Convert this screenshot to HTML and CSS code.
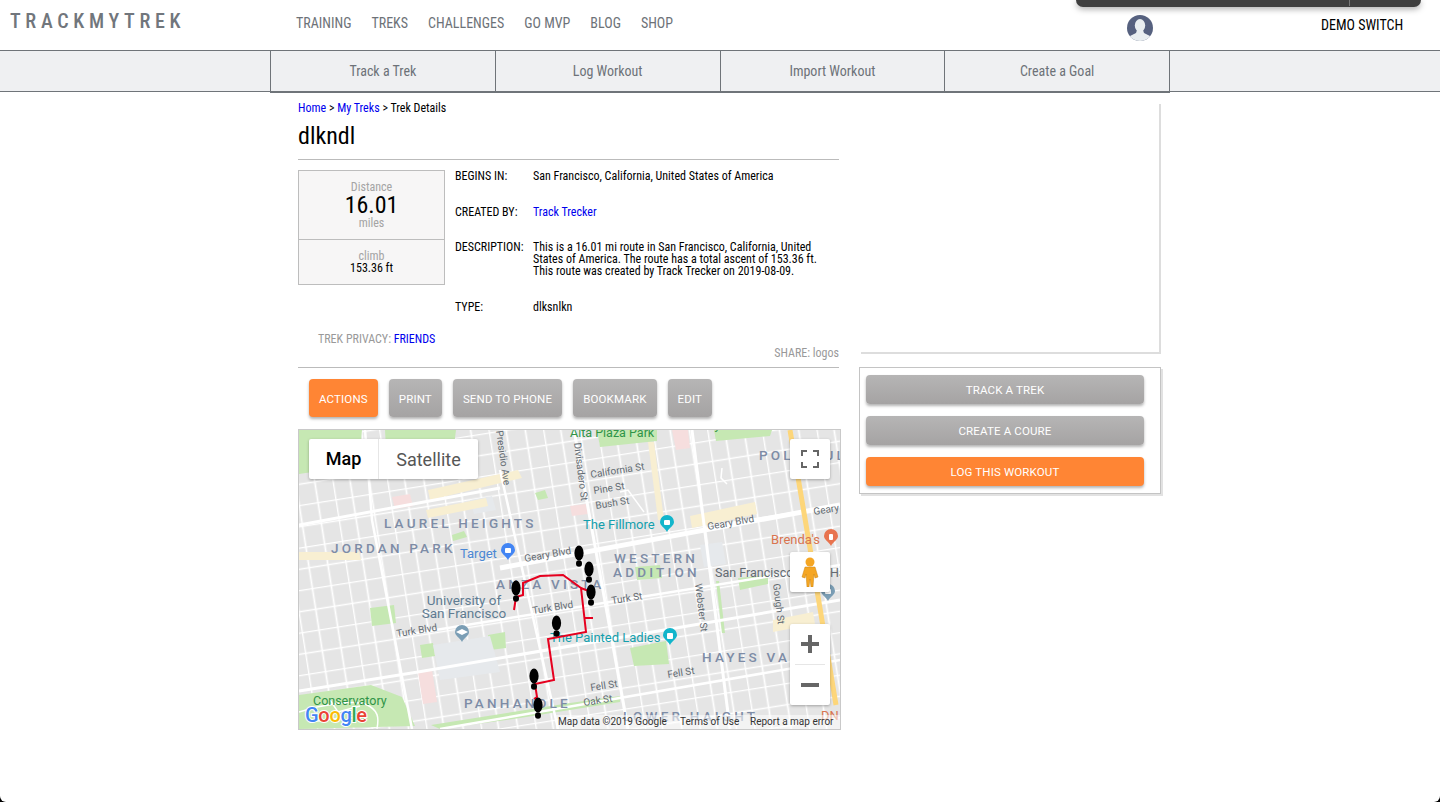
FILE: index.html
```html
<!DOCTYPE html>
<html lang="en">
<head>
<meta charset="utf-8">
<title>TrackMyTrek</title>
<link rel="stylesheet" href="styles.css">
</head>
<body>
<div class="osbar"></div>
<header class="topbar">
  <a class="logo">TRACKMYTREK</a>
  <nav class="mainnav"><a>TRAINING</a><a>TREKS</a><a>CHALLENGES</a><a>GO MVP</a><a>BLOG</a><a>SHOP</a></nav>
  <svg class="avatar" viewBox="0 0 26 26" width="26" height="26"><defs><clipPath id="av"><circle cx="13" cy="13" r="13"/></clipPath></defs><circle cx="13" cy="13" r="13" fill="#56617f"/><g clip-path="url(#av)" fill="#e9eef0"><ellipse cx="13" cy="10.5" rx="5.2" ry="6.5"/><path d="M10 15h6l1 3 6 3v6H3v-6l6-3z"/></g></svg>
  <span class="demo">DEMO SWITCH</span>
</header>
<div class="tabbar">
  <div class="tabs"><a class="tab">Track a Trek</a><a class="tab">Log Workout</a><a class="tab">Import Workout</a><a class="tab">Create a Goal</a></div>
</div>
<main class="page">
  <section class="left">
    <div class="crumbs"><a>Home</a> &gt; <a>My Treks</a> &gt; Trek Details</div>
    <h1 class="title">dlkndl</h1>
    <div class="details">
      <div class="stats">
        <div class="stat-main"><span class="stat-lbl">Distance</span><strong>16.01</strong><span class="stat-lbl">miles</span></div>
        <div class="stat-sub"><span class="stat-lbl">climb</span><b>153.36 ft</b></div>
      </div>
      <dl class="info">
        <dt class="r1">BEGINS IN:</dt><dd class="r1">San Francisco, California, United States of America</dd>
        <dt class="r2">CREATED BY:</dt><dd class="r2"><a>Track Trecker</a></dd>
        <dt class="r3">DESCRIPTION:</dt><dd class="r3">This is a 16.01 mi route in San Francisco, California, United States of America. The route has a total ascent of 153.36 ft. This route was created by Track Trecker on 2019-08-09.</dd>
        <dt>TYPE:</dt><dd>dlksnlkn</dd>
      </dl>
    </div>
    <div class="privacy">TREK PRIVACY: <a>FRIENDS</a></div>
    <div class="share">SHARE: logos</div>
    <div class="actions"><button class="btn orange">ACTIONS</button><button class="btn">PRINT</button><button class="btn">SEND TO PHONE</button><button class="btn">BOOKMARK</button><button class="btn">EDIT</button></div>
    <div class="map">
      <svg class="mapsvg" viewBox="299 430 541 299" width="541" height="299">
        <defs>
          <pattern id="grid" width="54" height="42" patternUnits="userSpaceOnUse" patternTransform="rotate(-9 300 430)">
            <rect width="54" height="42" fill="#e5e5e5"/>
            <path d="M0.500 0V42M17.500 0V42M36.500 0V42M0 .5H54M0 21.500H54" stroke="#fff" stroke-width="1.700" fill="none"/>
          </pattern>
          <path id="pin" d="M0-8a7 7 0 0 1 7 7c0 4-4.500 5-7 10-2.500-5-7-6-7-10a7 7 0 0 1 7-7z"/>
          <g id="foot" fill="#000"><ellipse cx="0" cy="-3" rx="4.600" ry="7.500"/><ellipse cx="0" cy="7.500" rx="3" ry="3.200"/></g>
        </defs>
        <rect x="299" y="430" width="541" height="299" fill="url(#grid)"/>
        <g fill="#c6e8b3">
          <path d="M299 430H362L358 470 340 468 299 474z"/><path d="M385 430H456L454 446 386 449z"/>
          <path d="M597 430H657L657 441 600 447z"/><path d="M714 430H772L770 436 716 441z"/>
          <path d="M630 648L666 641 669 664 634 666z"/><path d="M370 608L394 605 396 623 372 626z"/>
          <path d="M420 645L433 643 435 656 422 658z"/><path d="M488 635L505 632 506 648 490 650z"/>
          <path d="M299 695L371 685 402 697 415 726 299 729z"/><path d="M431 725L570 703 620 696 620 702 520 718 440 729z"/>
          <path d="M738 578L768 575 768 584 740 590z"/>
          <path d="M635 567L660 565 662 578 637 580z"/><path d="M535 493l10-3 3 8-10 2z"/><path d="M452 535l12-4 3 6-14 4z"/>
          <path d="M716 581h3l6 52h-3z"/>
        </g>
        <path d="M299 712c25-8 55-12 66-8 14 6 14 14 12 25M330 700l8 12 22-6M310 722l30-4" stroke="#fff" stroke-width="1.500" fill="none"/>
        <g fill="#e6e9ec"><path d="M433 645L490 636 500 672 440 680z"/><path d="M470 500l22-4 4 14-22 4z"/><path d="M700 545l22-3 4 22-22 3z"/></g>
        <g fill="#f8efd2"><path d="M428 490L518 470 522 478 430 500z"/><path d="M426 510l60-12 2 8-60 12z"/><path d="M299 552h60l2 8H299z"/><path d="M690 516l65-14 2 12-65 14z"/><path d="M773 620l40-8 2 12-42 8z"/><path d="M648 442l6 0 10 78-6 0z"/></g>
        <g fill="#f6dede"><path d="M392 497l18-3 3 12-18 3z"/><path d="M418 672l14-2 5 32-14 2z"/><path d="M672 430h16l2 18-14 2z"/><path d="M570 506l16-2 2 10-16 2z"/></g>
        <g stroke="#fff" fill="none" stroke-width="3">
          <path d="M299 525L500 488"/><path d="M299 691L418 672 840 600"/>
          <path d="M440 729L840 660" stroke-width="2.500"/><path d="M398 636L840 565" stroke-width="2.500"/>
          <path d="M500 568L840 505" stroke-width="5"/>
          <path d="M365 430L372 520 412 729" stroke-width="2.500"/><path d="M574 430L628 729" stroke-width="3"/>
          <path d="M500 470L558 729" stroke-width="2.500"/><path d="M692 430L730 729" stroke-width="3"/>
        </g>
        <path d="M790 430L812 560 836 705" stroke="#fdd67a" stroke-width="5" fill="none"/>
        <path d="M722 468l-1 10 6 6M620 492l8-2 16 22" stroke="#fff" stroke-width="1.500" fill="none"/>
        <g class="hood">
          <text x="384" y="528">LAUREL HEIGHTS</text><text x="331" y="553">JORDAN PARK</text>
          <text x="614" y="563">WESTERN</text><text x="613" y="577">ADDITION</text>
          <text x="496" y="589">ANZA VISTA</text><text x="759" y="460">POLK GULCH</text>
          <text x="702" y="662">HAYES VALLEY</text><text x="464" y="708">PANHANDLE</text><text x="623" y="721">LOWER HAIGHT</text>
        </g>
        <g class="road">
          <text transform="translate(496 431) rotate(82)">Presidio Ave</text>
          <text transform="translate(574 443) rotate(83)">Divisadero St</text>
          <text transform="translate(591 478) rotate(-9)">California St</text>
          <text transform="translate(594 494) rotate(-9)">Pine St</text>
          <text transform="translate(596 509) rotate(-9)">Bush St</text>
          <text transform="translate(525 562) rotate(-10)">Geary Blvd</text>
          <text transform="translate(708 530) rotate(-10)">Geary Blvd</text>
          <text transform="translate(814 515) rotate(-9)">Geary</text>
          <text transform="translate(533 614) rotate(-9)">Turk Blvd</text>
          <text transform="translate(397 637) rotate(-9)">Turk Blvd</text>
          <text transform="translate(612 604) rotate(-9)">Turk St</text>
          <text transform="translate(695 584) rotate(83)">Webster St</text>
          <text transform="translate(773 584) rotate(83)">Gough St</text>
          <text transform="translate(668 678) rotate(-9)">Fell St</text>
          <text transform="translate(591 691) rotate(-9)">Fell St</text>
          <text transform="translate(584 706) rotate(-9)">Oak St</text>
          <text class="road-big" x="715" y="577">San Francisco</text><text class="road-big" x="830" y="577">Ha</text>
        </g>
        <g class="poi">
          <text class="green" x="570" y="437">Alta Plaza Park</text><text class="green" x="690" y="429">Lafayette Park</text>
          <text class="teal" x="583" y="529">The Fillmore</text><text class="teal" x="550" y="642">The Painted Ladies</text>
          <text class="blue" x="460" y="558">Target</text><text class="orangey" x="771" y="544">Brenda's</text>
          <text class="uni" x="464" y="605" text-anchor="middle">University of</text><text class="uni" x="464" y="618" text-anchor="middle">San Francisco</text>
          <text class="green" x="313" y="705">Conservatory</text><text class="green" x="348" y="720">ers</text>
          <text class="orangey" x="821" y="720">DN</text>
        </g>
        <use href="#pin" x="667" y="523" fill="#12b5cb"/><use href="#pin" x="670" y="636" fill="#12b5cb"/>
        <use href="#pin" x="508" y="551" fill="#4285f4"/><use href="#pin" x="462" y="633" fill="#7b9eb5"/>
        <use href="#pin" x="831" y="537" fill="#e8744f"/><use href="#pin" x="828" y="592" fill="#7b9eb5"/>
        <g fill="#fff"><rect x="664" y="520" width="6" height="5" rx="1"/><rect x="667" y="633" width="6" height="6" rx="1"/><rect x="505" y="548" width="6" height="5" rx="1"/><path d="M456 632l6-3 6 3-6 3z"/><rect x="829" y="534" width="4" height="6" rx="1"/><rect x="825" y="589" width="6" height="5" rx="1"/></g>
        <path d="M514 610L516 597 523 595 523 583 540 576 563 575 581 588 586 632 548 639 554 680 535 684 537 697 534 699M585 618H593M581 588L591 592" stroke="#e6001f" stroke-width="2" fill="none"/>
        <use href="#foot" x="579" y="556"/><use href="#foot" x="589" y="572"/><use href="#foot" x="516" y="591"/><use href="#foot" x="591" y="595"/>
        <use href="#foot" x="556.500" y="626"/><use href="#foot" x="534" y="679"/><use href="#foot" x="538" y="708"/>
        <rect x="556" y="715" width="284" height="14" fill="#fff" fill-opacity=".55"/>
        <g class="attr"><text x="558" y="725">Map data ©2019 Google</text><text x="680" y="725">Terms of Use</text><text x="750" y="725">Report a map error</text></g>
        <text class="glogo" x="305" y="722"><tspan fill="#4285f4">G</tspan><tspan fill="#ea4335">o</tspan><tspan fill="#fbbc05">o</tspan><tspan fill="#4285f4">g</tspan><tspan fill="#34a853">l</tspan><tspan fill="#ea4335">e</tspan></text>
      </svg>
      <div class="maptype"><span class="mt-on">Map</span><span class="mt-off">Satellite</span></div>
      <div class="mapctl fs"><svg width="18" height="18" viewBox="0 0 18 18"><path d="M0 6V0h6v2H2v4zM12 0h6v6h-2V2h-4zM0 12h2v4h4v2H0zM16 12h2v6h-6v-2h4z" fill="#666"/></svg></div>
      <div class="mapctl peg"><svg width="18" height="30" viewBox="0 0 18 30"><circle cx="9" cy="5" r="4.500" fill="#f5a623"/><path d="M4 10h10l3 10-3 1-1-4-1 13H10l-1-8-1 8H6L5 17l-1 4-3-1z" fill="#f5a623" stroke="#c98211" stroke-width=".5"/></svg></div>
      <div class="mapctl zoom"><div class="zbtn"><svg width="18" height="18" viewBox="0 0 18 18"><path d="M7 0h4v7h7v4h-7v7H7v-7H0V7h7z" fill="#666"/></svg></div><div class="zbtn zminus"><svg width="18" height="4" viewBox="0 0 18 4"><rect width="18" height="4" fill="#666"/></svg></div></div>
    </div>
  </section>
  <aside class="right">
    <div class="adbox"></div>
    <div class="cta">
      <button class="btn wide">TRACK A TREK</button>
      <button class="btn wide">CREATE A COURE</button>
      <button class="btn wide orange">LOG THIS WORKOUT</button>
    </div>
  </aside>
</main>
</body>
</html>
```
FILE: styles.css
```css
* { box-sizing: border-box; }
html { background: #000; }
body {
  margin: 0; height: 802px; overflow: hidden; background: #fff;
  border-radius: 0 0 6px 6px; position: relative;
  font-family: Roboto, "Liberation Sans", sans-serif; font-size: 12px; font-stretch: 82%; color: #000;
}
a { color: inherit; text-decoration: none; }
.osbar {
  position: absolute; top: 0; left: 1076px; width: 345px; height: 7px;
  background: #3f3f3f; border-radius: 0 0 8px 8px; box-shadow: 0 2px 6px rgba(0,0,0,.35);
}
.osbar::after { content: ""; position: absolute; left: 273px; top: 0; width: 1px; height: 6px; background: #777; }
.topbar { height: 50px; display: flex; align-items: flex-start; }
.logo { margin: 9px 0 0 10px; width: 286px; font-size: 20px; font-weight: 500; line-height: 24px; letter-spacing: 4.700px; font-stretch: 80%; color: #71767c; }
.mainnav { display: flex; gap: 20px; margin-top: 15px; font-size: 14px; line-height: 17px; color: #6d7278; }
.avatar { margin: 15px 0 0 454px; }
.demo { margin: 17px 0 0 168px; font-size: 14px; line-height: 17px; color: #000; }
.tabbar { height: 42px; background: #eff0f2; border-top: 1px solid #6f7479; border-bottom: 1px solid #6f7479; display: flex; justify-content: center; }
.tabs { width: 900px; height: 42px; display: flex; border-left: 1px solid #6f7479; border-bottom: 2px solid #6f7479; }
.tab { flex: 1; display: flex; align-items: center; justify-content: center; border-right: 1px solid #6f7479; color: #6d7278; font-size: 14px; }
.page { display: flex; align-items: flex-start; padding-left: 298px; }
.left { width: 543px; margin-right: 18px; }
.crumbs { margin-top: 9px; height: 14px; line-height: 14px; }
.crumbs a, .info a, .privacy a { color: #0000ee; }
.title { margin: 6px 0 0; height: 39px; width: 541px; font-size: 24px; line-height: 30px; font-weight: 400; font-stretch: 85%; border-bottom: 1px solid #bbb; }
.details { display: flex; margin-top: 10px; height: 153px; }
.stats { width: 147px; height: 115px; border: 1px solid #bdbdbd; background: #f7f6f6; text-align: center; margin-right: 10px; }
.stat-main { height: 69px; border-bottom: 1px solid #bdbdbd; display: flex; flex-direction: column; padding-top: 9px; }
.stat-lbl { color: #a4a4a4; line-height: 14px; }
.stat-main strong { font-size: 24px; line-height: 22px; font-weight: 400; }
.stat-sub { display: flex; flex-direction: column; padding-top: 10px; }
.stat-sub .stat-lbl { line-height: 12px; }
.stat-sub b { font-weight: 400; line-height: 12px; }
.info { margin: 0; display: grid; grid-template-columns: 78px 306px; align-content: start; line-height: 12px; }
.info dt, .info dd { margin: 0; }
.info .r1 { margin-bottom: 24px; }
.info .r2 { margin-bottom: 23px; }
.info .r3 { margin-bottom: 24px; }
.privacy { margin: 9px 0 0 20px; height: 14px; line-height: 14px; color: #999; }
.share { width: 541px; text-align: right; height: 21px; line-height: 14px; color: #999; }
.actions { width: 541px; border-top: 1px solid #bbb; padding: 11px 0 0 11px; height: 62px; display: flex; gap: 11px; align-items: flex-start; }
.btn {
  height: 38px; padding: 2px 10px 0; border: 0; border-radius: 4px;
  background: linear-gradient(#b6b5b5, #a5a3a3); color: #fff; box-shadow: 0 2px 3px rgba(0,0,0,.3);
  font-family: Roboto, "Liberation Sans", sans-serif; font-size: 11.500px; font-weight: 400; font-stretch: 100%; letter-spacing: .15px;
}
.btn.orange { background: #ff8534; }
.btn.wide { display: block; width: 278px; height: 29px; padding-top: 0; }
.map { position: relative; width: 543px; height: 301px; border: 1px solid #c9c9c9; overflow: hidden; font-stretch: 100%; }
.mapsvg { display: block; font-family: Roboto, "Liberation Sans", sans-serif; }
.hood { font-size: 13.500px; font-weight: 500; letter-spacing: 3.200px; fill: #7d8ca6; }
.road { font-size: 10px; fill: #636b72; }
.road-big { font-size: 12.500px; }
.poi { font-size: 13px; }
.green { fill: #2f9447; font-size: 12.500px; }
.teal { fill: #149fad; }
.blue { fill: #4b88d4; }
.orangey { fill: #d9744f; }
.uni { fill: #5f7c92; font-size: 13.500px; }
.attr { font-size: 10px; fill: #333; }
.glogo { font-size: 20px; font-weight: 500; stroke: #fff; stroke-width: 2px; paint-order: stroke; letter-spacing: -.3px; }
.maptype { position: absolute; left: 10px; top: 9px; width: 169px; height: 40px; background: #fff; display: flex; border-radius: 2px; box-shadow: 0 1px 3px rgba(0,0,0,.3); font-size: 18px; align-items: center; }
.mt-on { width: 70px; height: 40px; line-height: 40px; text-align: center; font-weight: 500; border-right: 1px solid #e6e6e6; }
.mt-off { flex: 1; text-align: center; color: #565656; }
.mapctl { position: absolute; left: 491px; width: 40px; background: #fff; border-radius: 2px; box-shadow: 0 1px 3px rgba(0,0,0,.3); display: flex; align-items: center; justify-content: center; }
.fs { top: 9px; height: 40px; }
.peg { top: 122px; height: 40px; }
.zoom { top: 194px; height: 81px; flex-direction: column; }
.zbtn { width: 30px; height: 40px; display: flex; align-items: center; justify-content: center; }
.zminus { border-top: 1px solid #e6e6e6; height: 41px; }
.right { width: 302px; margin-left: 0; }
.adbox { width: 300px; height: 250px; margin: 12px 0 0 2px; border-right: 2px solid #ddd; border-bottom: 2px solid #ddd; }
.cta { margin-top: 13px; width: 302px; height: 127px; border: 1px solid #c4c4c4; box-shadow: 2px 2px 0 #e2e2e2; padding: 7px 0 0 6px; display: flex; flex-direction: column; gap: 12px; }
```
